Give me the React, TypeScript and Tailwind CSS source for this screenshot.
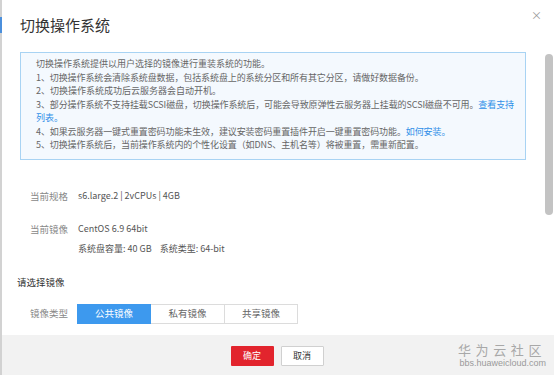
import React from "react";

const font = { fontFamily: '"Noto Sans CJK SC", "Noto Sans", sans-serif' };

export default function App() {
  return (
    <div className="flex h-[375px] w-[554px] overflow-hidden bg-white" style={font}>
      <div className="w-[2px] shrink-0 bg-[#d2d2d2]">
        <div className="mt-[17px] h-[16px] w-[2px] bg-[#4b8fdc]" />
      </div>
      <div className="flex min-w-0 flex-1 flex-col">
        <div className="flex h-[52px] shrink-0 items-start justify-between pl-[18px] pr-[12px]">
          <div className="pt-[15px] text-[15px] leading-[20px] text-[#333]">切换操作系统</div>
          <div className="pt-[8px] text-[11px] leading-[14px] text-[#999]">×</div>
        </div>
        <div className="flex min-h-0 flex-1">
          <div className="flex-1 pl-[18px] pr-[19px]">
            <div className="border border-[#a8d3f3] bg-[#f4f9fe] pb-[7px] pl-[15px] pt-[4px] text-[9px] leading-[13.5px] text-[#666]">
              <div className="whitespace-nowrap">切换操作系统提供以用户选择的镜像进行重装系统的功能。</div>
              <div className="whitespace-nowrap tracking-[-0.1px]">1、切换操作系统会清除系统盘数据，包括系统盘上的系统分区和所有其它分区，请做好数据备份。</div>
              <div className="whitespace-nowrap">2、切换操作系统成功后云服务器会自动开机。</div>
              <div className="whitespace-nowrap tracking-[-0.1px]">
                3、部分操作系统不支持挂载SCSI磁盘，切换操作系统后，可能会导致原弹性云服务器上挂载的SCSI磁盘不可用。
                <span className="text-[#2f8fe8]">查看支持</span>
              </div>
              <div className="whitespace-nowrap text-[#2f8fe8]">列表。</div>
              <div className="whitespace-nowrap tracking-[-0.1px]">
                4、如果云服务器一键式重置密码功能未生效，建议安装密码重置插件开启一键重置密码功能。
                <span className="text-[#2f8fe8]">如何安装。</span>
              </div>
              <div className="whitespace-nowrap tracking-[-0.1px]">5、切换操作系统后，当前操作系统内的个性化设置（如DNS、主机名等）将被重置，需重新配置。</div>
            </div>

            <div className="mt-[29px] flex items-center text-[9.5px] leading-[14px]">
              <div className="w-[48px] shrink-0 text-right text-[#888]">当前规格</div>
              <div className="ml-[10px] text-[9px] text-[#555]">s6.large.2 | 2vCPUs | 4GB</div>
            </div>

            <div className="mt-[19px] flex text-[9.5px] leading-[14px]">
              <div className="w-[48px] shrink-0 text-right text-[#888]">当前镜像</div>
              <div className="ml-[10px] text-[9px] text-[#555]">
                <div>CentOS 6.9 64bit</div>
                <div className="mt-[6px] flex">
                  <span>系统盘容量: 40 GB</span>
                  <span className="ml-[8px]">系统类型: 64-bit</span>
                </div>
              </div>
            </div>

            <div className="ml-[-3px] mt-[19px] text-[9.5px] leading-[14px] text-[#333]">请选择镜像</div>

            <div className="mt-[15px] flex items-center text-[9.5px]">
              <div className="w-[48px] shrink-0 text-right text-[#888]">镜像类型</div>
              <div className="ml-[9px] flex h-[20px]">
                <div className="flex w-[74px] items-center justify-center bg-[#3d99ee] text-white">公共镜像</div>
                <div className="flex w-[74px] items-center justify-center border-y border-r border-[#dcdcdc] text-[#666]">私有镜像</div>
                <div className="flex w-[73px] items-center justify-center border-y border-r border-[#dcdcdc] text-[#666]">共享镜像</div>
              </div>
            </div>
          </div>
          <div className="mr-[1px] w-[8px] shrink-0 pt-[2px]">
            <div className="h-[161px] w-[8px] rounded-full bg-[#c3c3c3]" />
          </div>
        </div>
        <div className="relative flex h-[40px] shrink-0 items-start justify-center gap-[7px] bg-[#f2f2f2] pr-[2px] pt-[11px]">
          <div className="flex h-[20px] w-[43px] items-center justify-center rounded-[1px] bg-[#e2242d] text-[9px] text-white">确定</div>
          <div className="flex h-[20px] w-[43px] items-center justify-center rounded-[1px] border border-[#d0d0d0] bg-white text-[9px] text-[#333]">取消</div>
          <div className="absolute right-[8px] top-[8px] flex flex-col items-end">
            <div className="text-[13px] leading-[14px] tracking-[4.6px] text-[#a8a8a8]">华为云社区</div>
            <div className="mt-[2px] text-[9px] leading-[9px] text-[#9a9a9a]" style={{ fontFamily: '"Liberation Sans", sans-serif' }}>bbs.huaweicloud.com</div>
          </div>
        </div>
      </div>
    </div>
  );
}
